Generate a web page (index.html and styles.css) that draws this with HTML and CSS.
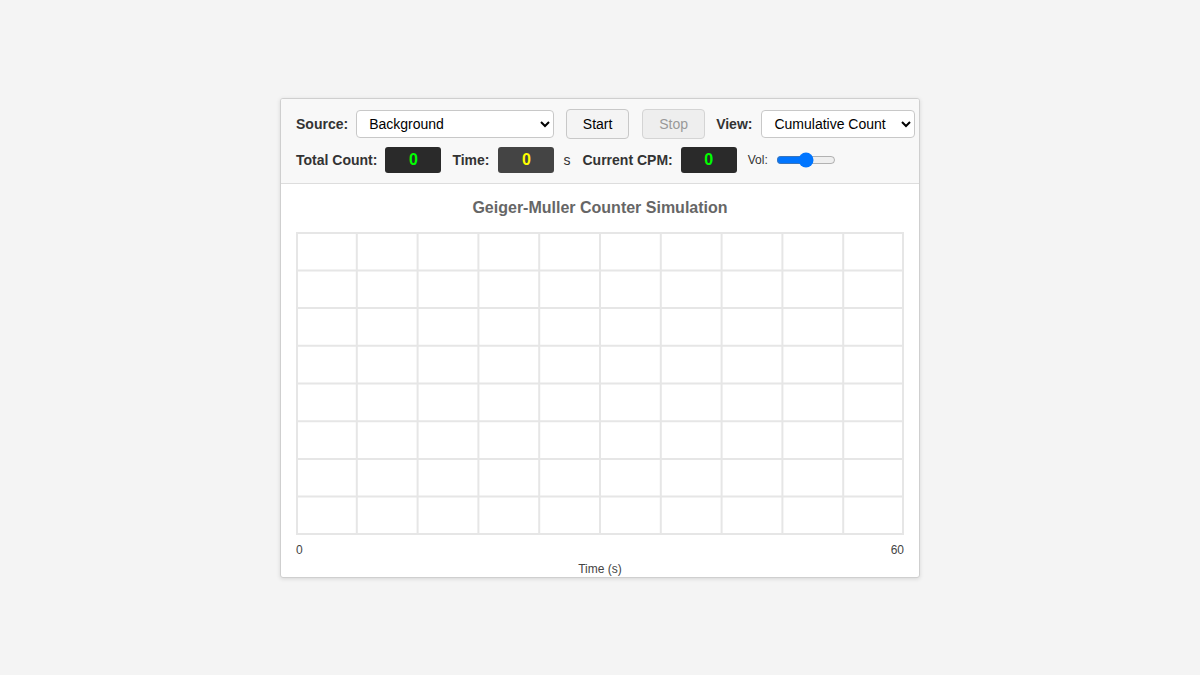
FILE: index.html
```html
<!DOCTYPE html>
<html lang="en">
<head>
    <meta charset="UTF-8">
    <title>Geiger-Muller Counter Simulation</title>
    <link rel="stylesheet" href="styles.css">
</head>
<body>
<div id="panel">
    <div class="controls">
        <div class="row">
            <label class="lbl">Source:</label>
            <select class="sel sel-source">
                <option>Background</option>
                <option>Source A</option>
            </select>
            <button class="btn">Start</button>
            <button class="btn" disabled>Stop</button>
            <label class="lbl">View:</label>
            <select class="sel sel-view">
                <option>Cumulative Count</option>
                <option>Count Rate</option>
            </select>
        </div>
        <div class="row">
            <span class="lbl">Total Count:</span>
            <span class="disp">0</span>
            <span class="lbl lbl-time">Time:</span>
            <span class="disp disp-time">0</span>
            <span class="unit">s</span>
            <span class="lbl">Current CPM:</span>
            <span class="disp">0</span>
            <span class="vol">Vol:</span>
            <input class="range" type="range" min="0" max="100" value="50">
        </div>
    </div>
    <div class="chart">
        <h3 class="title">Geiger-Muller Counter Simulation</h3>
        <svg class="grid" width="608" height="303" viewBox="0 0 608 303">
            <g stroke="#e6e6e6" stroke-width="2" fill="none">
                <line x1="60.8" y1="0" x2="60.8" y2="303"/>
                <line x1="121.6" y1="0" x2="121.6" y2="303"/>
                <line x1="182.4" y1="0" x2="182.4" y2="303"/>
                <line x1="243.2" y1="0" x2="243.2" y2="303"/>
                <line x1="304" y1="0" x2="304" y2="303"/>
                <line x1="364.8" y1="0" x2="364.8" y2="303"/>
                <line x1="425.6" y1="0" x2="425.6" y2="303"/>
                <line x1="486.4" y1="0" x2="486.4" y2="303"/>
                <line x1="547.2" y1="0" x2="547.2" y2="303"/>
                <line x1="0" y1="38.4" x2="608" y2="38.4"/>
                <line x1="0" y1="76.1" x2="608" y2="76.1"/>
                <line x1="0" y1="113.8" x2="608" y2="113.8"/>
                <line x1="0" y1="151.5" x2="608" y2="151.5"/>
                <line x1="0" y1="189.2" x2="608" y2="189.2"/>
                <line x1="0" y1="226.9" x2="608" y2="226.9"/>
                <line x1="0" y1="264.6" x2="608" y2="264.6"/>
                <rect x="1" y="1" width="606" height="301"/>
            </g>
        </svg>
        <div class="axis">
            <span>0</span>
            <span>60</span>
        </div>
        <div class="axis-title">Time (s)</div>
    </div>
</div>
</body>
</html>
```

FILE: styles.css
```css
*{
    margin : 0;
    padding: 0;
    box-sizing: border-box;
}
body{
    background: #f4f4f4;
    font: 14px "Liberation Sans", Arial, sans-serif;
    color: #333;
    height: 100vh;
    display: flex;
    align-items: center;
    justify-content: center;
}
#panel{
    width: 640px;
    background: #fff;
    border: 1px solid #cfcfcf;
    border-radius: 3px;
    box-shadow: 0 1px 4px rgba(0,0,0,0.12);
    overflow: hidden;
}
.controls{
    background: #f8f8f8;
    border-bottom: 1px solid #ddd;
    padding: 11px 15px 10px;
    display: flex;
    flex-direction: column;
    gap: 8px;
}
.row{
    display: flex;
    align-items: center;
    white-space: nowrap;
    height: 29px;
}
.row > *{
    flex-shrink: 0;
}
.row + .row{
    height: 26px;
}
.lbl{
    font-weight: 700;
    color: #333;
    margin-right: 8px;
}
.lbl-time{
    margin-right: 9px;
}
.sel{
    height: 28px;
    font: 14px "Liberation Sans", Arial, sans-serif;
    color: #000;
    background: #fff;
    border: 1px solid #c8c8c8;
    border-radius: 4px;
    padding: 0 4px 0 8px;
    margin-right: 12px;
}
.sel-source{
    width: 198px;
}
.sel-view{
    width: 154px;
    margin-left: 1px;
    margin-right: 0;
}
.btn{
    height: 30px;
    width: 63px;
    font: 14px "Liberation Sans", Arial, sans-serif;
    color: #000;
    background: #f4f4f4;
    border: 1px solid #c8c8c8;
    border-radius: 4px;
    margin-right: 13px;
}
.btn:disabled{
    color: #999;
    background: #eee;
    border-color: #d4d4d4;
    margin-right: 11px;
}
.disp{
    width: 56px;
    height: 26px;
    line-height: 26px;
    text-align: center;
    background: #2a2a2a;
    color: #00ff00;
    font-weight: 700;
    font-size: 16px;
    border-radius: 3px;
    margin-right: 11px;
}
.disp-time{
    background: #444;
    color: #ffff00;
    margin-right: 9px;
}
.unit{
    margin-right: 12px;
    color: #333;
}
.vol{
    font-size: 12px;
    color: #333;
    margin-right: 8px;
}
.range{
    width: 60px;
    accent-color: #0075ff;
}
.chart{
    padding: 14px 15px 1px;
}
.title{
    text-align: center;
    font-size: 16px;
    font-weight: 700;
    color: #666;
    line-height: 19px;
    margin-bottom: 15px;
}
.grid{
    display: block;
}
.axis{
    display: flex;
    justify-content: space-between;
    font-size: 12px;
    color: #444;
    line-height: 14px;
    margin-top: 8px;
}
.axis-title{
    text-align: center;
    font-size: 12px;
    color: #444;
    line-height: 14px;
    margin-top: 5px;
}
```
